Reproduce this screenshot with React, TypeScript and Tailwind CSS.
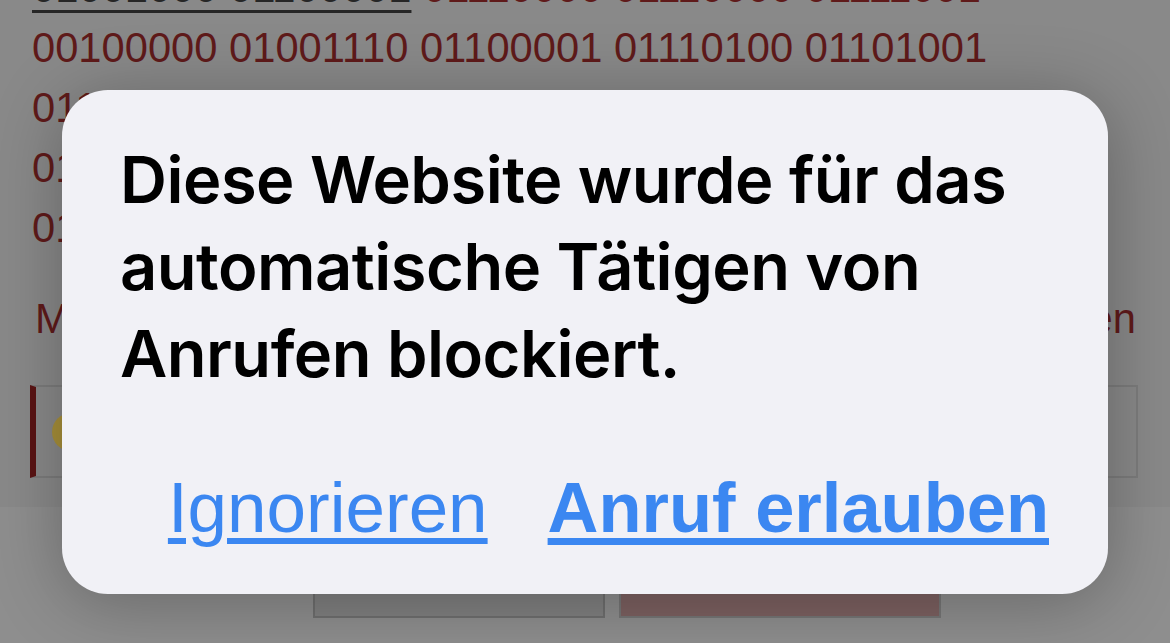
import React from 'react';

const BINARY_TAIL =
  ' 01110000 01110000 01111001 00100000 01001110 01100001 01110100 01101001 01101111 01101110 01100001 01101100 00100000 01000010 01101001 01101110 01100001 01110010 01111001 00100000 01000100';

const PageBehind: React.FC = () => (
  <div className="flex flex-col h-full">
    <div className="px-[32px] mt-[-42px] flex flex-col">
      <p className="text-[41.7px] leading-[60px] text-[#5f1a1a] w-[1040px]">
        <span className="text-[#262626] underline decoration-[3px] underline-offset-[8px]">01001000 01100001</span>
        {BINARY_TAIL}
      </p>
      <div className="mt-[33px] flex justify-between text-[41.7px] leading-[55px] text-[#5f1a1a] pl-[3px] pr-[2px]">
        <span>Mehr erfahren</span>
        <span>Artikel lesen</span>
      </div>
      <div className="mt-[39px] h-[93px] w-[1108px] ml-[-2px] border-2 border-[#7c7c7c] border-l-[6px] border-l-[#5a1414] flex items-center pl-[16px]">
        <div className="w-[38px] h-[38px] rounded-full bg-[#a8903a]" />
      </div>
    </div>
    <div className="mt-[29px] flex-1 bg-[#8e8e8e] flex justify-center gap-[14px] pt-[33px] pl-[84px]">
      <div className="w-[292px] h-[78px] border-2 border-[#6f6f6f] bg-[#818181]" />
      <div className="w-[322px] h-[78px] bg-[#7d6161] border-2 border-[#767676]" />
    </div>
  </div>
);

const CallBlockedAlert: React.FC = () => (
  <div className="absolute left-[62px] top-[90px] w-[1046px] h-[504px] rounded-[46px] bg-[#f1f1f6] shadow-[0_8px_70px_rgba(0,0,0,0.28)] flex flex-col pt-[46px] pl-[58px] pr-[59px]">
    <h1 className="font-['Inter',sans-serif] font-semibold text-[65px] leading-[87px] tracking-[-0.5px] text-black">
      Diese Website wurde für das
      <br />
      automatische Tätigen von
      <br />
      Anrufen blockiert.
    </h1>
    <div className="mt-[71px] flex justify-end gap-[60px] font-['Liberation_Sans',Arial,sans-serif] text-[71px] leading-[80px] text-[#3b87f1]">
      <button className="underline decoration-[6px] underline-offset-[6px]">Ignorieren</button>
      <button className="font-bold text-[70.5px] underline decoration-[7px] underline-offset-[6px]">Anruf erlauben</button>
    </div>
  </div>
);

export default function App() {
  return (
    <div className="relative w-[1170px] h-[643px] overflow-hidden bg-[#898989] font-['Liberation_Sans',Arial,sans-serif]">
      <PageBehind />
      <CallBlockedAlert />
    </div>
  );
}
